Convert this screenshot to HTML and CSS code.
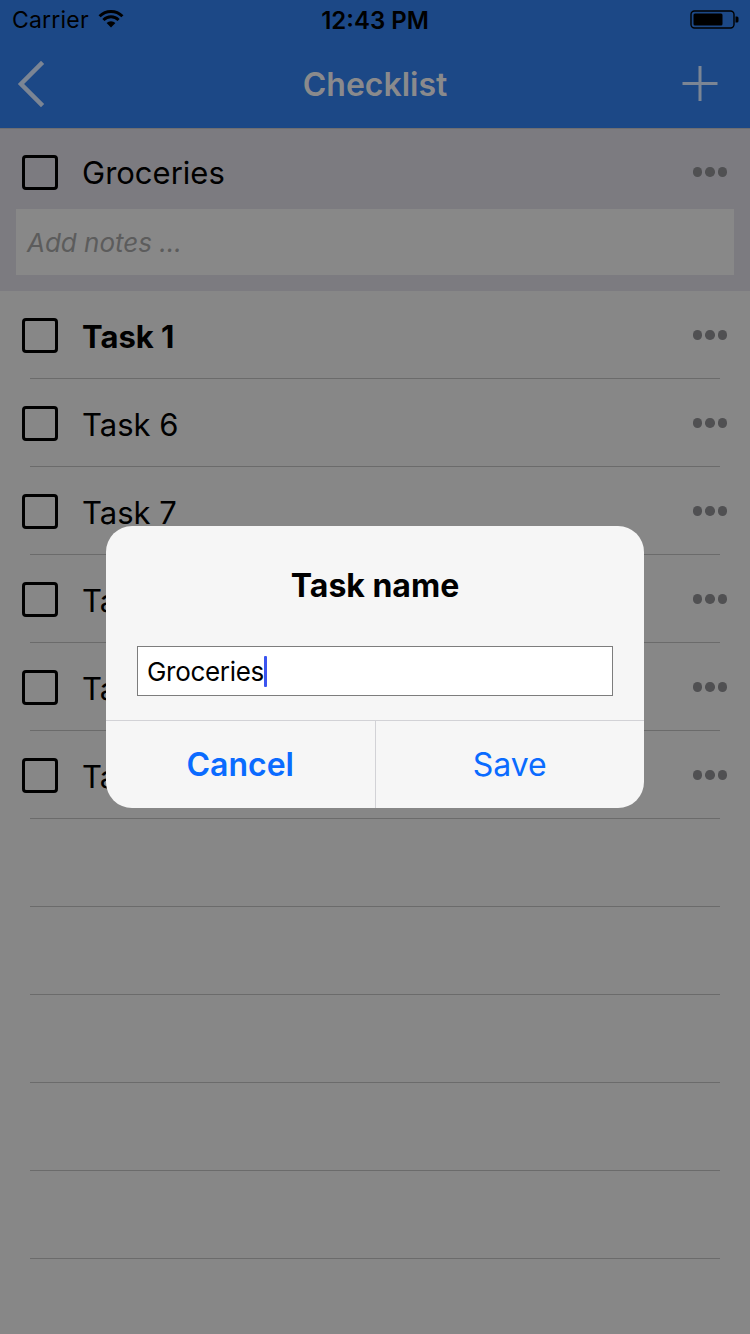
FILE: index.html
```
<!DOCTYPE html>
<html>
<head>
<meta charset="utf-8">
<link rel="stylesheet" href="styles.css">
</head>
<body>
<div class="screen">
  <div class="status">
    <div class="status-left">
      <span class="carrier">Carrier</span>
      <svg class="wifi" width="26" height="19" viewBox="0 0 26 19">
        <path d="M13 18.5 L8.6 14.1 A6.2 6.2 0 0 1 17.4 14.1 Z" fill="#000"/>
        <path d="M5.4 11 A10.8 10.8 0 0 1 20.6 11" stroke="#000" stroke-width="3" fill="none"/>
        <path d="M1.6 7.3 A16.2 16.2 0 0 1 24.4 7.3" stroke="#000" stroke-width="3" fill="none"/>
      </svg>
    </div>
    <div class="time">12:43 PM</div>
    <div class="status-right">
      <svg width="50" height="20" viewBox="0 0 50 20">
        <rect x="1" y="1" width="43" height="17" rx="3.5" fill="none" stroke="#000" stroke-width="1.4"/>
        <rect x="3.5" y="3.5" width="29" height="12" rx="1.5" fill="#000"/>
        <path d="M45.5 6.5 h1.5 a1.5 1.5 0 0 1 1.5 1.5 v3 a1.5 1.5 0 0 1 -1.5 1.5 h-1.5 z" fill="#000"/>
      </svg>
    </div>
  </div>
  <div class="nav">
    <div class="nav-side">
      <svg class="back" width="40" height="48" viewBox="0 0 40 48">
        <path d="M27 4 L7 24 L27 44" stroke="#7b8594" stroke-width="4.5" fill="none" stroke-linecap="square"/>
      </svg>
    </div>
    <div class="nav-title">Checklist</div>
    <div class="nav-side right">
      <svg class="plus" width="40" height="40" viewBox="0 0 40 40">
        <path d="M20 2 V37 M2.5 19.5 H37.5" stroke="#7b8594" stroke-width="3" fill="none"/>
      </svg>
    </div>
  </div>
  <div class="header">
    <div class="row-main">
      <span class="box"></span>
      <span class="label">Groceries</span>
      <span class="dots"><i></i><i></i><i></i></span>
    </div>
    <div class="notes">Add notes ...</div>
  </div>
  <div class="list">
    <div class="row"><span class="box"></span><span class="label bold">Task 1</span><span class="dots"><i></i><i></i><i></i></span></div>
    <div class="row"><span class="box"></span><span class="label">Task 6</span><span class="dots"><i></i><i></i><i></i></span></div>
    <div class="row"><span class="box"></span><span class="label">Task 7</span><span class="dots"><i></i><i></i><i></i></span></div>
    <div class="row"><span class="box"></span><span class="label">Task 8</span><span class="dots"><i></i><i></i><i></i></span></div>
    <div class="row"><span class="box"></span><span class="label">Task 9</span><span class="dots"><i></i><i></i><i></i></span></div>
    <div class="row"><span class="box"></span><span class="label">Task 10</span><span class="dots"><i></i><i></i><i></i></span></div>
    <div class="row empty"></div>
    <div class="row empty"></div>
    <div class="row empty"></div>
    <div class="row empty"></div>
    <div class="row empty"></div>
  </div>

  <div class="dialog">
    <div class="dialog-title">Task name</div>
    <div class="input"><span>Groceries</span><span class="caret"></span></div>
    <div class="actions">
      <div class="btn cancel">Cancel</div>
      <div class="btn save">Save</div>
    </div>
  </div>
</div>
</body>
</html>
```

FILE: styles.css
```
* { box-sizing: border-box; }
html, body { margin: 0; padding: 0; }
body {
  width: 750px;
  height: 1334px;
  overflow: hidden;
  background: #878787;
  font-family: Inter, "Noto Sans", "Liberation Sans", sans-serif;
  color: #000;
}
.screen {
  position: relative;
  width: 750px;
  height: 1334px;
  background: #878787;
}
.status {
  height: 40px;
  background: #1c4886;
  display: flex;
  align-items: center;
  justify-content: space-between;
  padding: 0 10px 0 12px;
  position: relative;
}
.status-left { display: flex; align-items: center; gap: 9px; }
.carrier { font-size: 23px; letter-spacing: 0.2px; }
.wifi { margin-top: -3px; }
.time {
  position: absolute;
  left: 0; right: 0;
  text-align: center;
  font-size: 24px;
  font-weight: 600;
  pointer-events: none;
}
.status-right { display: flex; align-items: center; }
.nav {
  height: 89px;
  background: #1c4886;
  border-bottom: 1px solid #6e6e72;
  display: flex;
  align-items: center;
  padding: 0 30px 0 14px;
}
.nav-side { flex: 1; display: flex; align-items: center; }
.nav-side.right { justify-content: flex-end; }
.nav-title {
  font-size: 32px;
  font-weight: 600;
  color: #8a8a8c;
  margin-left: 16px;
}
.plus { margin-top: -1px; }
.header {
  background: #7c7b80;
  height: 162px;
  padding-bottom: 15px;
}
.row-main {
  height: 80px;
  padding-top: 6px;
  display: flex;
  align-items: center;
  padding-left: 22px;
  padding-right: 23px;
}
.box {
  width: 36px;
  height: 35px;
  border: 3.5px solid #000;
  border-radius: 4px;
  flex: none;
}
.label {
  font-size: 31px;
  margin-left: 24px;
  flex: 1;
  white-space: nowrap;
}
.label.bold { font-weight: 700; }
.dots { display: flex; gap: 3px; }
.dots i {
  display: block;
  width: 9.5px;
  height: 9.5px;
  border-radius: 50%;
  background: #505052;
}
.notes {
  margin: 0 16px;
  height: 66px;
  background: #888888;
  font-size: 26px;
  font-style: italic;
  color: #5c5c5c;
  padding-left: 11px;
  display: flex;
  align-items: center;
}
.row {
  height: 88px;
  display: flex;
  align-items: center;
  padding-left: 22px;
  padding-right: 23px;
  position: relative;
}
.row::after {
  content: "";
  position: absolute;
  left: 30px;
  right: 30px;
  bottom: 0;
  height: 1px;
  background: #6b6b6b;
}
.row .label { margin-top: 2px; }
.dialog {
  position: absolute;
  left: 106px;
  top: 526px;
  width: 538px;
  height: 282px;
  background: #f6f6f6;
  border-radius: 26px;
  display: flex;
  flex-direction: column;
  overflow: hidden;
}
.dialog-title {
  text-align: center;
  font-size: 32px;
  font-weight: 700;
  padding-top: 40px;
  height: 120px;
}
.input {
  margin: 0 31px;
  height: 50px;
  border: 1.5px solid #7d7d7d;
  background: #fff;
  display: flex;
  align-items: center;
  padding-left: 9px;
  font-size: 26px;
  letter-spacing: -0.3px;
}
.caret {
  width: 3px;
  height: 31px;
  background: #3b55f0;
  border-radius: 1px;
}
.actions {
  margin-top: 24px;
  border-top: 1.5px solid #d2d2d6;
  display: flex;
  flex: 1;
}
.btn {
  flex: 1;
  display: flex;
  align-items: center;
  justify-content: center;
  font-size: 32px;
  color: #0a6bff;
}
.btn.cancel { font-weight: 600; border-right: 1.5px solid #d2d2d6; }
```
